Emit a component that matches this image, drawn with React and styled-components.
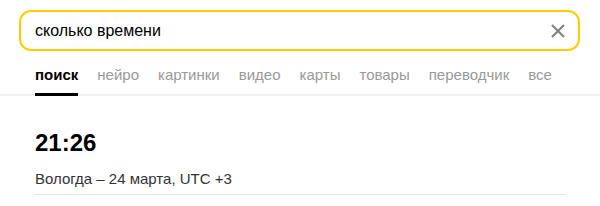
import React from 'react'
import styled, { createGlobalStyle } from 'styled-components'

const GlobalStyle = createGlobalStyle`
  body {
    margin: 0;
    background: #fff;
    font-family: "Liberation Sans", Arial, sans-serif;
  }
`

const Page = styled.div`
  width: 600px;
`

const Header = styled.div`
  padding: 10px 20px 0 19px;
`

const SearchBox = styled.div`
  display: flex;
  align-items: center;
  height: 41px;
  box-sizing: border-box;
  border: 2px solid #fc0;
  border-radius: 12px;
  padding: 0 12px 0 14px;
`

const Query = styled.div`
  flex: 1;
  font-size: 16px;
  color: #000;
`

const Clear = styled.button`
  border: 0;
  background: none;
  padding: 0;
  width: 14px;
  height: 14px;
  margin-right: 1px;
  display: flex;
  cursor: pointer;
`

const Nav = styled.nav`
  display: flex;
  gap: 19px;
  margin-top: 15px;
  padding: 0 35px;
  border-bottom: 2px solid #f0f0f0;
`

const Tab = styled.a`
  font-size: 15px;
  line-height: 18px;
  padding-bottom: 9px;
  margin-bottom: -2px;
  border-bottom: 3px solid ${p => (p.$active ? '#000' : 'transparent')};
  color: ${p => (p.$active ? '#000' : '#999')};
  font-weight: ${p => (p.$active ? 700 : 400)};
  text-decoration: none;
`

const Result = styled.section`
  margin: 33px 35px 0;
  padding-bottom: 5px;
  border-bottom: 1px solid #e6e6e6;
`

const Time = styled.div`
  font-size: 24px;
  line-height: 28px;
  font-weight: 700;
  color: #000;
`

const Place = styled.div`
  margin-top: 12px;
  font-size: 15px;
  line-height: 20px;
  color: #333;
`

const tabs = ['поиск', 'нейро', 'картинки', 'видео', 'карты', 'товары', 'переводчик', 'все']

export default function App() {
  return (
    <Page>
      <GlobalStyle />
      <Header>
        <SearchBox>
          <Query>сколько времени</Query>
          <Clear aria-label="очистить">
            <svg width="14" height="14" viewBox="0 0 14 14">
              <path d="M1 1L13 13M13 1L1 13" stroke="#7f7f7f" strokeWidth="2" />
            </svg>
          </Clear>
        </SearchBox>
      </Header>
      <Nav>
        {tabs.map((t, i) => (
          <Tab key={t} $active={i === 0}>{t}</Tab>
        ))}
      </Nav>
      <Result>
        <Time>21:26</Time>
        <Place>Вологда – 24 марта, UTC +3</Place>
      </Result>
    </Page>
  )
}
